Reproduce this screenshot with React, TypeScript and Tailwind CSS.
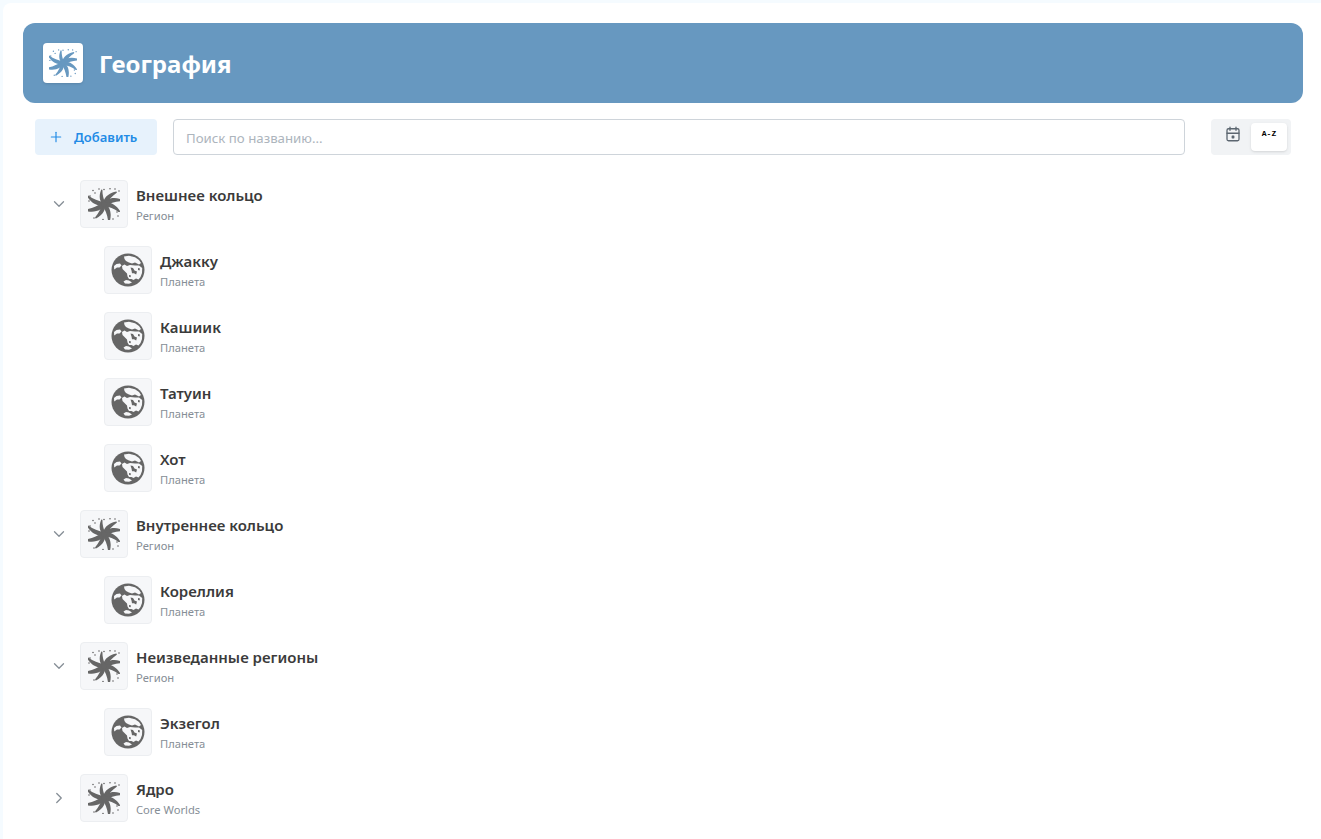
import { ChevronDown, ChevronRight, Plus } from "lucide-react";

const arms = [
  { r: 0, s: 0.9 },
  { r: 32, s: 0.95 },
  { r: 70, s: 0.9 },
  { r: 118, s: 0.95 },
  { r: 165, s: 0.85 },
  { r: 205, s: 1 },
  { r: 250, s: 0.95 },
  { r: 305, s: 0.75 },
];

const dots = [
  [5, 2.5], [11, 1], [16, 1.5], [27, 1], [31, 3], [2, 8], [1, 13], [7, 5],
  [29, 24], [30, 28], [25, 31], [15, 31.5], [6, 30], [2, 22], [22, 0.8],
];

function Galaxy({ color = "#666666", size = 32 }: { color?: string; size?: number }) {
  return (
    <svg width={size} height={size} viewBox="0 0 32 32" fill={color}>
      {arms.map((a) => (
        <path
          key={a.r}
          transform={`rotate(${a.r} 16 16) translate(16 16) scale(${a.s}) translate(-16 -16)`}
          d="M15 17C14.5 10 20 4 29.5 2C30.5 2.2 30.5 3.2 29.8 3.8C25 7 21 11.5 17.5 17.5Z"
        />
      ))}
      <circle cx="16" cy="16" r="2.6" fill={color} />
      {dots.map(([x, y]) => (
        <circle key={`${x}-${y}`} cx={x} cy={y} r="0.8" />
      ))}
    </svg>
  );
}

function Planet() {
  return (
    <svg width="34" height="34" viewBox="0 0 34 34">
      <circle cx="17" cy="17" r="16.5" fill="#666666" />
      <path fill="#f6f7f9" d="M13 3.4L18 2.8L24 4.2L28 7L30 10L28 11.5L24 9.5L21 10.5L18 9.5L15 8L13.5 6Z" />
      <path fill="#f6f7f9" d="M3 13L5.5 11L9 10.5L10.5 12.5L8.5 14.5L6 14.5L3.2 16.5Z" />
      <path
        fill="#f6f7f9"
        d="M11 13L13.5 11.5L16 13L19 12L24 12.5L28 12.5L31.2 15L31 20L29.5 24L27.5 26.5L25 25.5L22.5 27L20.5 26L18 26L16.5 23.5L16 20.5L13.5 18L11.5 16Z"
      />
      <path fill="#f6f7f9" d="M12.5 28.5L15 27L18 27.5L21 29.5L18 30.8L14 30.6Z" />
      <path fill="#666666" d="M19.5 14.5L22 15L23.5 17.5L26 18.5L25.2 21.5L23 20.2L21 20.2L20.5 17.5Z" />
      <path fill="#666666" d="M27 15L29 15.5L28.5 17.5L27 17Z" />
      <path fill="#666666" d="M18 22L20 22.5L19.5 24.2L18 23.8Z" />
    </svg>
  );
}

function Row({
  name,
  type,
  kind,
  state,
}: {
  name: string;
  type: string;
  kind: "region" | "planet";
  state?: "open" | "closed";
}) {
  return (
    <div className={`flex items-center ${kind === "planet" ? "ml-[69px]" : "ml-[12px]"}`}>
      {kind === "region" && (
        <div className="w-[33px] flex justify-center pr-[9px] text-[#868e96]">
          {state === "open" ? (
            <ChevronDown size={18} strokeWidth={1.75} />
          ) : (
            <ChevronRight size={18} strokeWidth={1.75} />
          )}
        </div>
      )}
      <div className="w-12 h-12 shrink-0 flex items-center justify-center rounded bg-[#f6f7f9] border border-[#eceef1]">
        {kind === "region" ? <Galaxy /> : <Planet />}
      </div>
      <div className="ml-2 flex flex-col">
        <span className="text-[15px] leading-5 font-semibold text-[#3b3b3b]">{name}</span>
        <span className="text-[11.2px] leading-4 mt-[3px] text-[#868e96]">{type}</span>
      </div>
    </div>
  );
}

export default function App() {
  return (
    <div className="min-h-screen bg-[#f5fbff] pt-[3px] pl-[3px] font-['Noto_Sans','Open_Sans',sans-serif]">
      <div className="min-h-[836px] bg-white rounded-tl-lg pt-5 pl-5 pr-[18px]">
        <header className="h-20 rounded-xl bg-[#6798c0] flex items-center px-5">
          <div className="w-10 h-10 rounded bg-white flex items-center justify-center shadow-sm">
            <Galaxy color="#6798c0" size={28} />
          </div>
          <h1 className="ml-4 pt-[2px] text-2xl font-bold text-white">География</h1>
        </header>

        <div className="mt-4 mx-3 flex items-center">
          <button className="w-[122px] h-9 rounded bg-[#e7f2fc] flex items-center pl-[13px] text-[#228be6] text-[13px] font-semibold">
            <Plus size={16} strokeWidth={1.75} />
            <span className="ml-[10px] pt-[1px]">Добавить</span>
          </button>
          <input
            className="ml-4 flex-1 h-9 rounded border border-[#ced4da] px-3 pt-[1px] text-[13.25px] outline-none placeholder:text-[#adb5bd]"
            placeholder="Поиск по названию..."
          />
          <div className="ml-[26px] w-20 h-9 rounded bg-[#f1f3f5] p-1 flex">
            <div className="w-9 h-7 flex items-center justify-center pb-[6px] text-[#5c6670]">
              <svg width="18" height="18" viewBox="0 0 24 24" fill="none" stroke="currentColor" strokeWidth="1.75" strokeLinecap="round" strokeLinejoin="round">
                <rect x="4" y="5" width="16" height="16" rx="2" />
                <path d="M16 3v4M8 3v4M4 11h16" />
                <rect x="11" y="15" width="2" height="2" fill="currentColor" />
              </svg>
            </div>
            <div className="w-9 h-7 rounded bg-white shadow-sm flex justify-center pt-[5px] text-[8px] leading-3 font-bold text-black font-['Liberation_Mono',monospace]">
              A-Z
            </div>
          </div>
        </div>

        <div className="mt-[25px] ml-3 flex flex-col gap-[18px]">
          <Row name="Внешнее кольцо" type="Регион" kind="region" state="open" />
          <Row name="Джакку" type="Планета" kind="planet" />
          <Row name="Кашиик" type="Планета" kind="planet" />
          <Row name="Татуин" type="Планета" kind="planet" />
          <Row name="Хот" type="Планета" kind="planet" />
          <Row name="Внутреннее кольцо" type="Регион" kind="region" state="open" />
          <Row name="Кореллия" type="Планета" kind="planet" />
          <Row name="Неизведанные регионы" type="Регион" kind="region" state="open" />
          <Row name="Экзегол" type="Планета" kind="planet" />
          <Row name="Ядро" type="Core Worlds" kind="region" state="closed" />
        </div>
      </div>
    </div>
  );
}
